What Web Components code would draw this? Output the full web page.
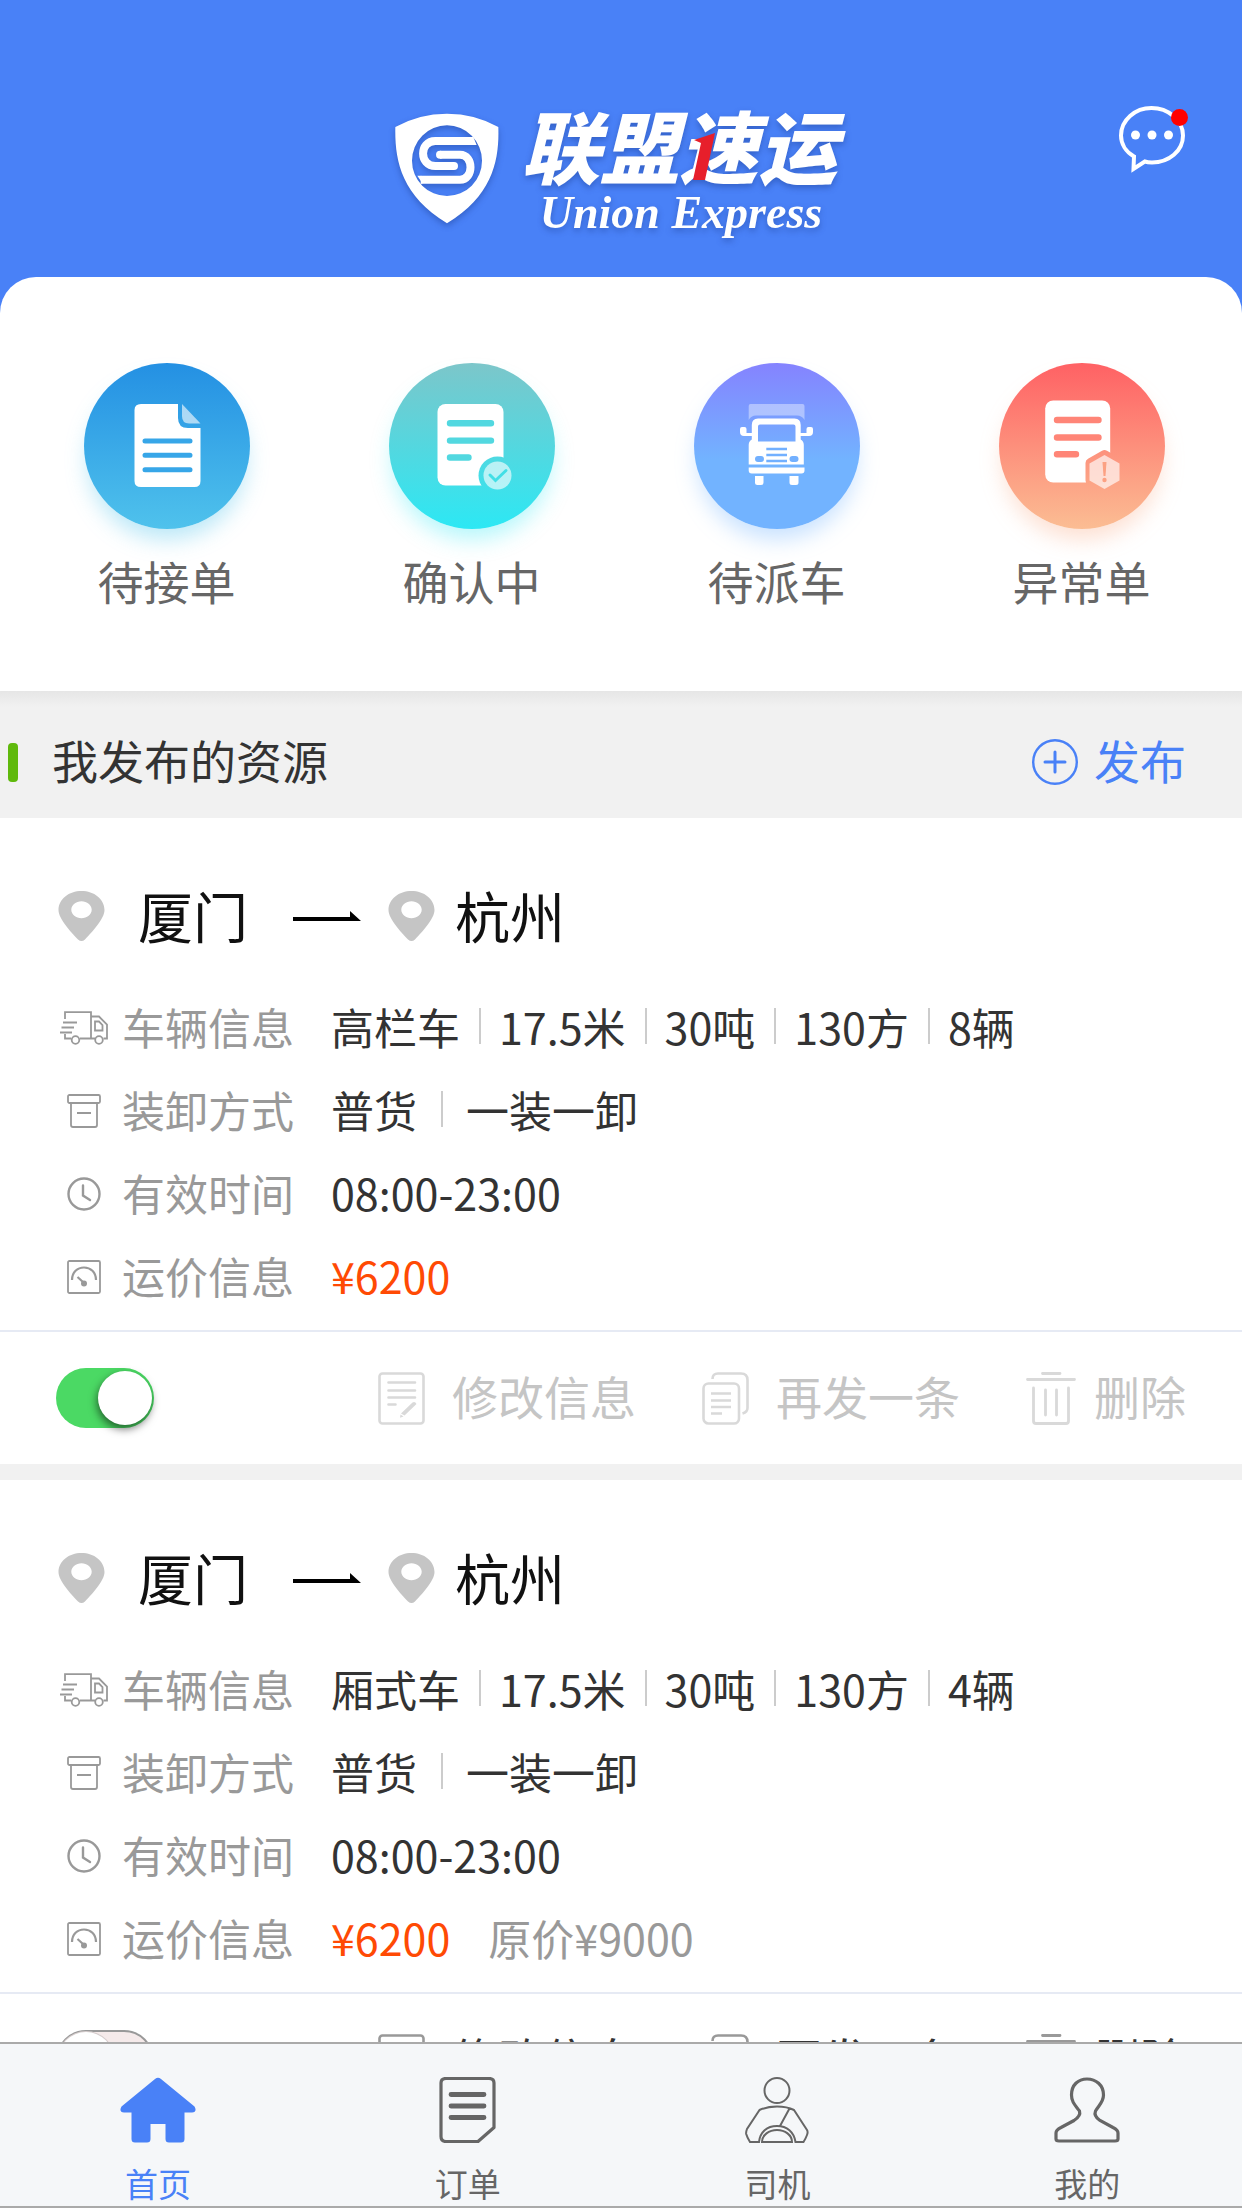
<!DOCTYPE html>
<html lang="zh-CN">
<head>
<meta charset="UTF-8">
<meta name="viewport" content="width=device-width, initial-scale=1">
<title>联盟速运</title>
<style>
  body {
    margin: 0;
    font-family: "Noto Sans CJK SC", "Noto Sans", sans-serif;
    color: #333;
  }
</style>
</head>
<body>
<freight-app></freight-app>

<script>
const icons = {
  message: {
    box: '0 0 70 67',
    body: `<path d="M15 50.5C7 46 2 38 2 29.500C2 14 16 2 32.500 2S64 14 64 29.500 50 56.500 33 56.500C30.500 56.500 28 56.300 25.800 55.500L14.500 63Z" fill="none" stroke="#fff" stroke-width="4"/>
      <g fill="#fff"><circle cx="16.500" cy="29" r="4.500"/><circle cx="33" cy="29" r="4.500"/><circle cx="49.500" cy="29" r="4.500"/></g>`
  },
  plus: {
    box: '0 0 46 46',
    body: '<g fill="none" stroke="currentColor"><circle cx="23" cy="23" r="21.800" stroke-width="2.400"/><path d="M13 23H33M23 13V33" stroke-width="3" stroke-linecap="round"/></g>'
  },
  pin: {
    box: '0 0 47 50',
    body: '<path fill="#c5c5c5" fill-rule="evenodd" d="M23.500 0C36 0 46.500 8 46.500 19C46.500 28 34 41 27 48.500Q23.500 51.500 20 48.500C13 41 .5 28 .5 19C.5 8 11 0 23.500 0ZM23.500 10.300C18 10.300 13.300 14 13.300 18.800S18 27.300 23.500 27.300 33.700 23.600 33.700 18.800 29 10.300 23.500 10.300Z"/>'
  },
  arrow: {
    box: '0 0 68 10',
    body: '<path d="M0 6H57V0L68 10H0Z"/>'
  },
  truck: {
    box: '0 0 48 34',
    body: `<g fill="none" stroke="currentColor" stroke-width="1.800">
      <path d="M5 8V1.200H31V27.500M31 5.500H39L47 13.500V27.500H43.500M35 27.500H20M11 27.500H5V23M3 11.500H17M1.500 16.500H14M0 21.500H12"/>
      <path d="M35 10.500H39L42.500 14V19.500H35Z"/><circle cx="15.500" cy="29" r="3.800"/><circle cx="39" cy="29" r="3.800"/></g>`
  },
  box: {
    box: '0 0 34 34',
    body: '<g fill="none" stroke="currentColor" stroke-width="1.800"><rect x="1" y="1" width="32" height="8" rx="1.500"/><path d="M4 9V31Q4 33 6 33H28Q30 33 30 31V9M10 19H24"/></g>'
  },
  clock: {
    box: '0 0 34 34',
    body: '<g fill="none" stroke="currentColor" stroke-width="2.400" stroke-linecap="round"><circle cx="17" cy="17" r="15.500"/><path d="M16 8.500V18.500L23 23"/></g>'
  },
  gauge: {
    box: '0 0 34 34',
    body: '<g fill="none" stroke="currentColor" stroke-width="1.800"><rect x="1" y="1" width="32" height="32" rx="1.500"/><path d="M5 20C5 12 10.500 7.500 17 7.500S29 12 29 20M10.500 17L16 22" stroke-width="2.200"/></g><circle cx="17" cy="23.500" r="3" fill="currentColor"/>'
  },
  edit: {
    box: '0 0 47 53',
    body: `<g fill="none" stroke="currentColor" stroke-width="2.600" stroke-linecap="round"><rect x="1.500" y="1.500" width="44" height="50" rx="3"/><path d="M10.500 10.500H37M10.500 18.500H37M10.500 25.500H37M10.500 32.500H17.500"/></g>
      <path fill="currentColor" d="M34.500 30.500Q37 29 38.500 32L26.500 43.500L23 41.500ZM22.500 42.500L25.500 44.500L22 45.800Z"/>`
  },
  copy: {
    box: '0 0 47 53',
    body: `<g fill="none" stroke="currentColor" stroke-width="2.600"><rect x="1.500" y="11.500" width="35.500" height="40" rx="5"/><path d="M10.500 7Q10.500 1.500 16 1.500H39Q45.500 1.500 45.500 8V36Q45.500 40 40.500 41.500"/>
      <path d="M9 21.500H29M9 28.500H29M9 35H29M9 41.500H20"/></g>`
  },
  trash: {
    box: '0 0 50 53',
    body: '<g fill="none" stroke="currentColor" stroke-width="2.800" stroke-linecap="round"><path d="M16.500 1.500H34M1.500 7.500H48.500M7.500 16V49Q7.500 51.500 10 51.500H40Q42.500 51.500 42.500 49V16M19.500 18V43M30.500 18V43"/></g>'
  },
  home: {
    box: '0 0 76 66',
    body: '<path fill="currentColor" d="M35 2Q38 -.7 41 2L74.500 29.500Q77.500 35 72 35.500H64.500V62Q64.500 65.500 61 65.500H49Q45.500 65.500 45.500 62V47H30.500V62Q30.500 65.500 27 65.500H15Q11.500 65.500 11.500 62V35.500H4Q-1.500 35 1.500 29.500Z"/>'
  },
  order: {
    box: '0 0 57 66',
    body: `<path d="M7 1.500H50Q55 1.500 55 6V50.500L39 64.500H7Q2 64.500 2 59.500V6Q2 1.500 7 1.500Z" fill="none" stroke="currentColor" stroke-width="3.200" stroke-linejoin="round"/>
      <path d="M12 17.500H45M12 29H45M12 40.500H45" stroke="currentColor" stroke-width="4.800" stroke-linecap="round"/>`
  },
  driver: {
    box: '0 0 64 66',
    body: `<g fill="none" stroke="currentColor" stroke-width="2"><ellipse cx="32" cy="13.500" rx="12.500" ry="12.500"/>
      <path d="M5 65Q2 60 1.200 57Q.8 55 2 52L14.500 33Q22 29.500 32 29.500T49 33L62 53Q63.200 55 62 58Q60.500 62 58.500 65H50.500C49 55 42 49 32 49S15 55 14 65ZM35 49L44.500 31.500"/><path d="M17 65C17 58 24 53 32 53S47 58 47 65Z"/></g>`
  },
  user: {
    box: '0 0 66 66',
    body: '<path d="M2 62V56Q2 53 7 50.500L20 43.500Q27 39 25.500 34C21 28 17.500 25 17.500 18C17.500 8 24 2 33 2S49.500 8 49.500 18C49.500 25 45 28 41.500 34Q39.500 39 46 43.500L59 50.500Q64 53 64 56V62Q64 64 61 64H5Q2 64 2 62Z" fill="none" stroke="currentColor" stroke-width="3.200"/>'
  },
  pending: {
    box: '0 0 166 166',
    body: `<path fill="#fff" d="M57 41H94V55Q94 65 104 65H116.500V118Q116.500 124 110.500 124H57Q50.500 124 50.500 118V47Q50.500 41 57 41Z"/>
      <path fill="#fff" opacity=".6" d="M98 41L116.500 60.500H105Q98 60.500 98 53Z"/>
      <path d="M61 78H106M61 92.300H106M61 106.700H106" stroke="#37a6e8" stroke-width="5" stroke-linecap="round"/>`
  },
  confirm: {
    box: '0 0 166 166',
    body: `<mask id="m"><rect width="166" height="166" fill="#fff"/><circle cx="108.500" cy="112.500" r="19" fill="#000"/></mask>
      <rect x="48.500" y="41" width="66" height="81.500" rx="8" fill="#fff" mask="url(#m)"/>
      <g stroke="#52d8e0" fill="none" stroke-linecap="round"><path d="M61 60.300H102M61 77.600H102M61 94.500H79.500" stroke-width="6.400"/></g>
      <circle cx="108.500" cy="112.500" r="14" fill="#fff" opacity=".62"/>
      <path d="M101 112L106.500 117.500L117 107.500" stroke="#42dfe6" stroke-width="3" fill="none" stroke-linecap="round"/>`
  },
  dispatch: {
    box: '0 0 166 166',
    body: `<path fill="#fff" opacity=".4" d="M56.500 41H108.500Q110.500 41 110.500 43V57Q108 52.500 103 52.500H62Q57 52.500 54.700 57V43Q54.700 41 56.500 41Z"/>
      <path fill="#fff" fill-rule="evenodd" d="M64 55.500H100.500Q106.700 55.500 106.700 62V70H112.500V66Q112.500 64 114.500 64H117Q119 64 119 66V69Q119 73 115 73H106.700V76.500Q109.800 78 109.800 82V101.500H54.700V82Q54.700 78 57.800 76.500V73H50Q46 73 46 69V66Q46 64 48 64H50.500Q52.500 64 52.500 66V70H57.800V62Q57.800 55.500 64 55.500ZM66 61.500Q64 61.500 64 63.500V78.500H101.500V63.500Q101.500 61.500 99.500 61.500Z"/>
      <path fill="#fff" d="M54.700 104.500H110.500V107.500Q110.500 110.500 107.500 110.500H57.700Q54.700 110.500 54.700 107.500ZM61 113H69.500V119.500Q69.500 122 67 122H63.500Q61 122 61 119.500ZM95.500 113H104.500V119.500Q104.500 122 102 122H98Q95.500 122 95.500 119.500Z"/>
      <path d="M72.300 86H93M72.300 92H93M72.300 98H93" stroke="#72b0ff" stroke-width="2.600"/>
      <rect x="61" y="93" width="9" height="6" rx="3" fill="#72b0ff"/><rect x="95.500" y="93" width="9" height="6" rx="3" fill="#72b0ff"/>`
  },
  abnormal: {
    box: '0 0 166 166',
    body: `<mask id="m"><rect width="166" height="166" fill="#fff"/><path d="M105.500 92L119.500 100V117.500L105.500 125.500L91.500 117.500V100Z" fill="#000" stroke="#000" stroke-width="10" stroke-linejoin="round"/></mask>
      <rect x="46.200" y="37.500" width="65" height="82" rx="8" fill="#fff" mask="url(#m)"/>
      <path d="M58 57H99.500M58 74.500H99.500M58 91.300H77" stroke="#ff8577" stroke-width="6.400" stroke-linecap="round"/>
      <path d="M105.500 92L120.500 100.500V117.500L105.500 126L90.500 117.500V100.500Z" fill="#fff" opacity=".65"/>
      <path d="M103.500 99H107.500L106.500 113H104.500Z" fill="#fca183"/><circle cx="105.500" cy="117" r="2.200" fill="#fca183"/>`
  }
};

class AppIcon extends HTMLElement {
  connectedCallback() {
    this.attachShadow({ mode: 'open' });
    const icon = icons[this.getAttribute('name')];
    const [, , width, height] = icon.box.split(' ');
    this.shadowRoot.innerHTML = `
      <style>
        :host { display: inline-flex; flex: none; }
        svg { display: block; }
      </style>
      <svg width="${width}" height="${height}" viewBox="${icon.box}" aria-hidden="true">${icon.body}</svg>
    `;
  }
}

class BrandLogo extends HTMLElement {
  connectedCallback() {
    this.attachShadow({ mode: 'open' });
    this.shadowRoot.innerHTML = `
      <style>
        :host {
          display: flex;
          align-items: flex-start;
          gap: 22px;
          color: #fff;
          filter: drop-shadow(0 3px 3px rgba(20, 50, 130, 0.4));
        }

        .shield { margin-top: 7px; }

        .names {
          display: flex;
          flex-direction: column;
          align-items: center;
          gap: 7px;
        }

        .name {
          position: relative;
          font-size: 79px;
          line-height: 76px;
          font-weight: 900;
          font-style: italic;
        }

        /* red stroke over the third character */
        .stroke {
          position: absolute;
          left: 172px;
          top: 27px;
        }

        .latin {
          padding-left: 4px;
          font: italic bold 46px/48px "Liberation Serif", serif;
        }
      </style>
      <svg class="shield" width="104" height="111" viewBox="13 14 312 333" aria-hidden="true">
        <path fill="#fff" fill-rule="evenodd" d="M14 56Q85 16 169 16T323 56C326 150 310 260 169 345C28 260 12 150 14 56ZM169 51A105 106 0 1 0 169 263A105 106 0 1 0 169 51Z"/>
        <path d="M246 98H134C85 98 85 173 134 173H190" fill="none" stroke="#fff" stroke-width="24"/>
        <path d="M148 139H208C250 139 250 214 208 214H90" fill="none" stroke="#fff" stroke-width="24"/>
        <path fill="#fff" d="M244 86H248L258 110H244ZM92 226H96L80 202H92Z"/>
        <circle cx="148" cy="139" r="12" fill="#fff"/><circle cx="190" cy="173" r="12" fill="#fff"/>
      </svg>
      <div class="names">
        <div class="name">联盟速运
          <svg class="stroke" width="24" height="47" viewBox="0 0 24 47" aria-hidden="true"><path fill="#e71f2b" d="M22 0L12 47H0L8 10L1 7Z"/></svg>
        </div>
        <div class="latin">Union Express</div>
      </div>
    `;
  }
}

class MessageButton extends HTMLElement {
  connectedCallback() {
    this.attachShadow({ mode: 'open' });
    this.shadowRoot.innerHTML = `
      <style>
        :host { display: block; }

        button {
          position: relative;
          display: block;
          padding: 0;
          border: none;
          background: none;
          cursor: pointer;
        }

        .badge {
          position: absolute;
          top: 3px;
          right: 1px;
          width: 17px;
          height: 17px;
          border-radius: 50%;
          background: #f00;
        }
      </style>
      <button aria-label="消息"><app-icon name="message"></app-icon><span class="badge"></span></button>
    `;
  }
}

class QuickAction extends HTMLElement {
  connectedCallback() {
    this.attachShadow({ mode: 'open' });
    this.shadowRoot.innerHTML = `
      <style>
        :host { display: block; }

        a {
          display: flex;
          flex-direction: column;
          align-items: center;
          gap: 23px;
          color: #666;
          font-size: 46px;
          line-height: 56px;
          text-decoration: none;
        }

        app-icon {
          border-radius: 50%;
          background: linear-gradient(var(--from), var(--to) var(--stop, 100%));
          box-shadow: 0 14px 22px -4px var(--glow);
        }
      </style>
      <a href="#"><app-icon name="${this.getAttribute('icon')}"></app-icon><slot></slot></a>
    `;
  }
}

class SectionHead extends HTMLElement {
  connectedCallback() {
    this.attachShadow({ mode: 'open' });
    this.shadowRoot.innerHTML = `
      <style>
        :host {
          display: flex;
          align-items: center;
          padding: 36px 56px 27px 8px;
          background: linear-gradient(#e6e6e6, #f1f1f1 16px);
          font-size: 46px;
          line-height: 64px;
        }

        .mark {
          width: 10px;
          height: 39px;
          margin: 6px 34px 0 0;
          border-radius: 4px;
          background: #5fb90c;
        }

        h2 {
          flex: 1;
          margin: 0;
          font: inherit;
        }

        button {
          display: flex;
          align-items: center;
          gap: 16px;
          padding: 0;
          border: none;
          background: none;
          color: #4981f7;
          font: inherit;
          cursor: pointer;
        }

        app-icon { margin-top: 6px; }
      </style>
      <span class="mark"></span>
      <h2><slot></slot></h2>
      <button><app-icon name="plus"></app-icon>${this.getAttribute('action')}</button>
    `;
  }
}

class InfoRow extends HTMLElement {
  connectedCallback() {
    this.attachShadow({ mode: 'open' });
    this.shadowRoot.innerHTML = `
      <style>
        :host {
          display: grid;
          grid-template-columns: 48px 209px 1fr;
          column-gap: 14px;
          align-items: center;
          height: 83px;
          font-size: 43px;
          line-height: 60px;
        }

        app-icon {
          justify-self: center;
          margin-top: 4px;
          color: #999;
        }

        .label { color: #999; }

        .value {
          display: flex;
          align-items: center;
          margin-left: -14px;
        }

        ::slotted(span:not(:first-of-type)) {
          margin-left: var(--gap, 19px);
          padding-left: calc(var(--gap, 19px) + 1px);
          background: linear-gradient(#ccc, #ccc) left center / 2px 36px no-repeat;
        }

        ::slotted(strong) {
          color: #ff4a04;
          font-weight: 400;
        }

        ::slotted(s) {
          margin-left: 38px;
          color: #999;
          text-decoration: none;
        }
      </style>
      <app-icon name="${this.getAttribute('icon')}"></app-icon>
      <span class="label">${this.getAttribute('label')}</span>
      <div class="value"><slot></slot></div>
    `;
  }
}

class StatusSwitch extends HTMLElement {
  connectedCallback() {
    this.attachShadow({ mode: 'open' });
    this.shadowRoot.innerHTML = `
      <style>
        :host { display: block; }

        input {
          appearance: none;
          display: flex;
          align-items: center;
          box-sizing: border-box;
          width: 98px;
          height: 60px;
          margin: 0;
          border: 2px solid #999;
          border-radius: 30px;
          background: #f5eaea;
          cursor: pointer;
        }

        input::before {
          content: "";
          width: 56px;
          height: 56px;
          border-radius: 50%;
          background: #fff;
          box-shadow: 0 0 0 1px #d5cccc;
        }

        input:checked {
          justify-content: flex-end;
          padding-right: 2px;
          border: none;
          background: #4bd964;
        }

        input:checked::before {
          width: 54px;
          height: 54px;
          box-shadow: -1px 4px 8px rgba(0, 0, 0, 0.55);
        }
      </style>
      <input type="checkbox" role="switch" aria-label="发布状态" ${this.hasAttribute('on') ? 'checked' : ''}>
    `;
  }
}

class CargoCard extends HTMLElement {
  connectedCallback() {
    this.attachShadow({ mode: 'open' });
    const on = this.hasAttribute('on');

    this.shadowRoot.innerHTML = `
      <style>
        :host {
          display: block;
          border-bottom: 16px solid #f1f1f1;
          background: #fff;
        }

        .route {
          display: flex;
          align-items: center;
          padding: 64px 58px 38px;
          color: #111;
          font-size: 55px;
          line-height: 64px;
        }

        .route app-icon { margin-top: 4px; }
        .from { margin: 0 45px 0 33px; }
        .route .arrow { margin-right: 27px; }
        .to { margin-left: 20px; }

        .info { padding: 0 56px 14px 60px; }

        .actions {
          display: flex;
          align-items: center;
          justify-content: space-between;
          height: 132px;
          padding: 0 56px;
          border-top: 2px solid #e6eaf4;
        }

        .buttons {
          display: flex;
          gap: 66px;
          padding-bottom: 6px;
        }

        button {
          display: flex;
          align-items: center;
          gap: 27px;
          padding: 0;
          border: none;
          background: none;
          color: ${on ? '#c5c5c5' : '#333'};
          font: inherit;
          font-size: 46px;
          line-height: 60px;
          cursor: pointer;
        }

        button app-icon {
          margin-top: 6px;
          color: ${on ? '#d9d9d9' : '#999'};
        }

        button.delete { gap: 18px; }
      </style>

      <div class="route">
        <app-icon name="pin"></app-icon>
        <span class="from">${this.getAttribute('from')}</span>
        <app-icon class="arrow" name="arrow"></app-icon>
        <app-icon name="pin"></app-icon>
        <span class="to">${this.getAttribute('to')}</span>
      </div>
      <div class="info"><slot></slot></div>
      <div class="actions">
        <status-switch ${on ? 'on' : ''}></status-switch>
        <div class="buttons">
          <button><app-icon name="edit"></app-icon>修改信息</button>
          <button><app-icon name="copy"></app-icon>再发一条</button>
          <button class="delete"><app-icon name="trash"></app-icon>删除</button>
        </div>
      </div>
    `;
  }
}

class TabItem extends HTMLElement {
  connectedCallback() {
    this.attachShadow({ mode: 'open' });
    this.shadowRoot.innerHTML = `
      <style>
        :host { display: block; }

        a {
          display: flex;
          flex-direction: column;
          align-items: center;
          gap: 20px;
          color: ${this.hasAttribute('active') ? '#4981f7' : '#666'};
          font-size: 33px;
          line-height: 40px;
          text-decoration: none;
        }
      </style>
      <a href="#"><app-icon name="${this.getAttribute('icon')}"></app-icon><slot></slot></a>
    `;
  }
}

class FreightApp extends HTMLElement {
  connectedCallback() {
    this.attachShadow({ mode: 'open' });
    this.shadowRoot.innerHTML = `
      <style>
        :host {
          display: flex;
          flex-direction: column;
          height: 100vh;
          background: #fff;
        }

        main {
          flex: 1;
          min-height: 0;
          overflow-y: auto;
          scrollbar-width: none;
        }

        .top { background: #4981f7; }

        header {
          display: grid;
          grid-template-columns: 1fr auto 1fr;
          padding: 106px 53px 40px;
        }

        brand-logo {
          grid-column: 2;
          margin-right: 10px;
        }

        message-button { justify-self: end; }

        .quick {
          display: grid;
          grid-template-columns: repeat(4, 1fr);
          padding: 86px 8px 83px 14px;
          border-radius: 36px 36px 0 0;
          background: #fff;
        }

        .pending { --from: #2490e3; --to: #4fc2ec; --glow: rgba(79, 194, 236, 0.4); }
        .confirm { --from: #7cc6ca; --to: #2ce8f4; --glow: rgba(44, 232, 244, 0.35); }
        .dispatch { --from: #8583ff; --to: #72b3ff; --stop: 58%; --glow: rgba(114, 179, 255, 0.4); }
        .abnormal { --from: #ff6164; --to: #fbbd93; --glow: rgba(251, 175, 140, 0.4); }

        .wide { --gap: 24px; }

        nav {
          display: grid;
          grid-template-columns: repeat(4, 1fr);
          padding: 33px 0 3px 3px;
          border-top: 2px solid #aaa;
          border-bottom: 2px solid #aaa;
          background: #f5f7f9;
        }
      </style>

      <main>
        <div class="top">
          <header>
            <brand-logo></brand-logo>
            <message-button></message-button>
          </header>
          <div class="quick">
            <quick-action class="pending" icon="pending">待接单</quick-action>
            <quick-action class="confirm" icon="confirm">确认中</quick-action>
            <quick-action class="dispatch" icon="dispatch">待派车</quick-action>
            <quick-action class="abnormal" icon="abnormal">异常单</quick-action>
          </div>
        </div>

        <section-head action="发布">我发布的资源</section-head>

        <cargo-card from="厦门" to="杭州" on>
          <info-row icon="truck" label="车辆信息"><span>高栏车</span><span>17.5米</span><span>30吨</span><span>130方</span><span>8辆</span></info-row>
          <info-row class="wide" icon="box" label="装卸方式"><span>普货</span><span>一装一卸</span></info-row>
          <info-row icon="clock" label="有效时间"><span>08:00-23:00</span></info-row>
          <info-row icon="gauge" label="运价信息"><strong>¥6200</strong></info-row>
        </cargo-card>

        <cargo-card from="厦门" to="杭州">
          <info-row icon="truck" label="车辆信息"><span>厢式车</span><span>17.5米</span><span>30吨</span><span>130方</span><span>4辆</span></info-row>
          <info-row class="wide" icon="box" label="装卸方式"><span>普货</span><span>一装一卸</span></info-row>
          <info-row icon="clock" label="有效时间"><span>08:00-23:00</span></info-row>
          <info-row icon="gauge" label="运价信息"><strong>¥6200</strong><s>原价¥9000</s></info-row>
        </cargo-card>
      </main>

      <nav>
        <tab-item icon="home" active>首页</tab-item>
        <tab-item icon="order">订单</tab-item>
        <tab-item icon="driver">司机</tab-item>
        <tab-item icon="user">我的</tab-item>
      </nav>
    `;
  }
}

customElements.define('app-icon', AppIcon);
customElements.define('brand-logo', BrandLogo);
customElements.define('message-button', MessageButton);
customElements.define('quick-action', QuickAction);
customElements.define('section-head', SectionHead);
customElements.define('info-row', InfoRow);
customElements.define('status-switch', StatusSwitch);
customElements.define('cargo-card', CargoCard);
customElements.define('tab-item', TabItem);
customElements.define('freight-app', FreightApp);
</script>
</body>
</html>
